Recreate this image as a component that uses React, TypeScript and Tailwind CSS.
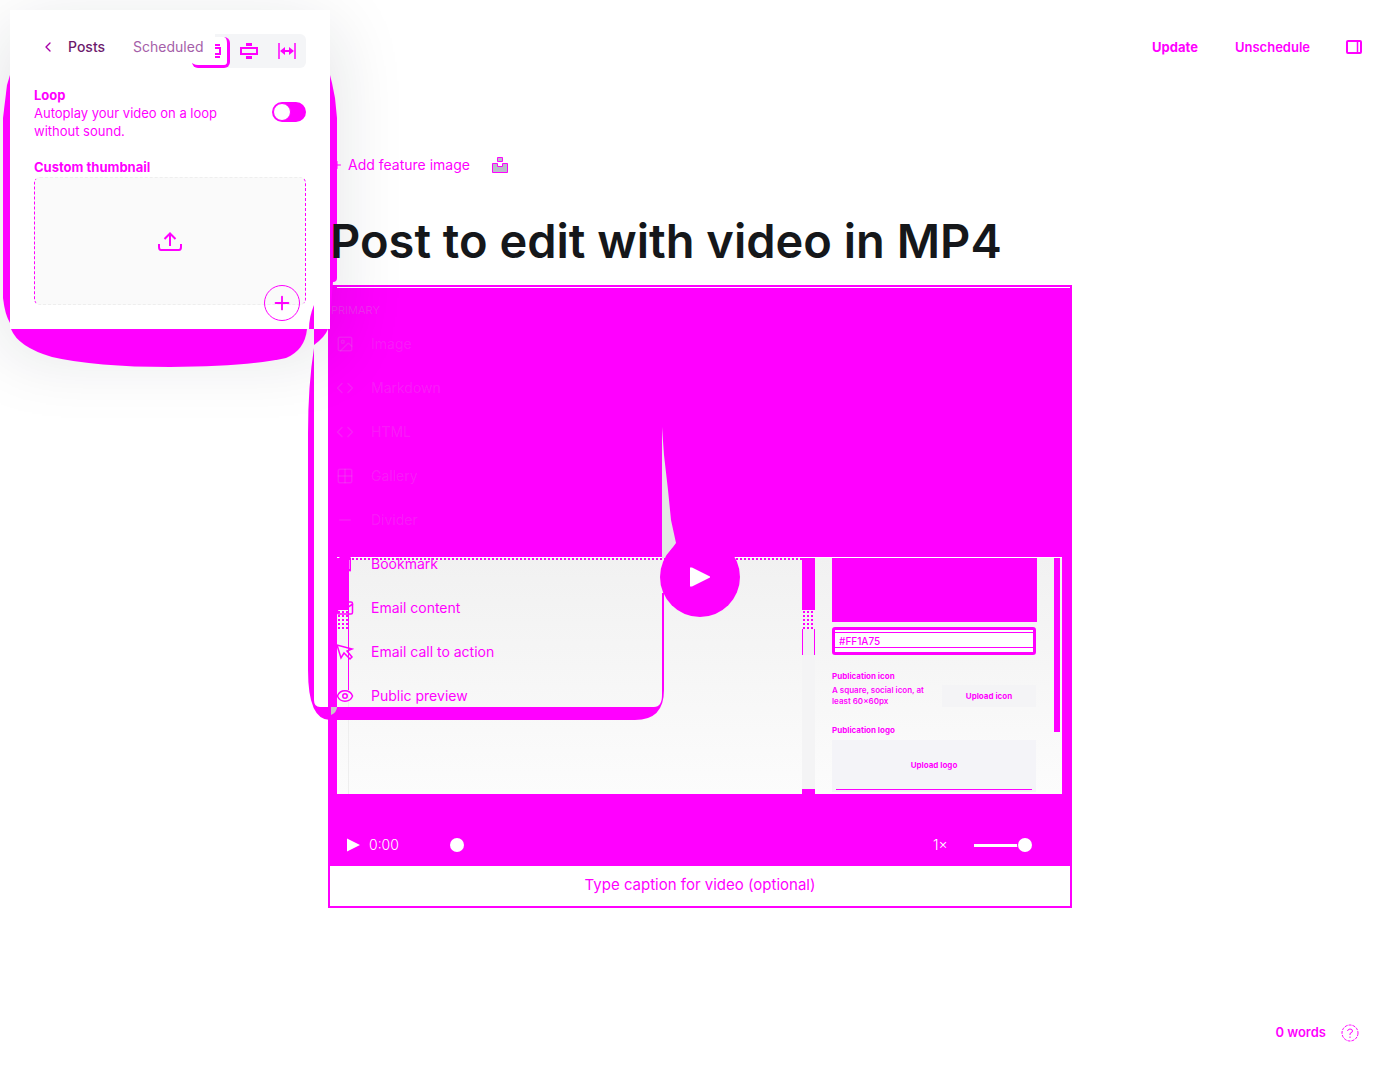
import React from 'react';
import { ChevronLeft, Mail, Eye, Image, Code, Grid2x2, Minus, Bookmark, Plus } from 'lucide-react';

const cardItems = [
  { label: 'Image', icon: Image },
  { label: 'Markdown', icon: Code },
  { label: 'HTML', icon: Code },
  { label: 'Gallery', icon: Grid2x2 },
  { label: 'Divider', icon: Minus },
];

function CursorIcon() {
  return (
    <svg width="18" height="18" viewBox="0 0 18 18" fill="none" stroke="currentColor" strokeWidth="1.5">
      <path d="M1 2l4 13 3-5 6 6 2-2-5-6 5-2z" />
    </svg>
  );
}

function EditorHeader() {
  return (
    <header className="flex h-[94px] items-center justify-between pl-8 pr-[38px] text-[#ff00ff]">
      <div className="relative z-20 flex items-center">
        <a href="#posts" className="flex h-8 items-center bg-white pl-2 pr-4 text-sm font-medium text-[#6c1a6c]">
          <ChevronLeft size={16} strokeWidth={2} className="mr-3 text-[#a800a8]" />
          Posts
        </a>
        <span className="h-8 bg-white px-3 text-sm leading-8 text-[#a55fa9]">Scheduled</span>
      </div>
      <div className="flex items-center">
        <button className="mr-[37px] text-[13px] font-bold leading-8">Update</button>
        <button className="mr-9 text-[13px] font-semibold leading-8">Unschedule</button>
        <button aria-label="Settings">
          <svg width="16" height="14" viewBox="0 0 16 14" fill="none" stroke="currentColor" strokeWidth="2">
            <rect x="1" y="1" width="14" height="12" rx="1" />
            <path d="M11.500 1v12" strokeWidth="1.5" />
          </svg>
        </button>
      </div>
    </header>
  );
}

function VideoSettings() {
  return (
    <>
      <aside className="absolute left-[10px] top-[10px] z-10 w-80 bg-white p-6 text-[13px] text-[#ff00ff] shadow-[0_20px_70px_rgba(20,25,40,0.14)]">
        <div className="ml-auto flex h-[34px] w-[114px] items-center rounded-md bg-[#f4f5f7]">
          <button aria-label="Regular width" className="mt-[3px] flex h-[31px] w-[38px] items-center justify-center rounded-md border-b-[3px] border-r-[3px] border-[#ff00ff] bg-white pl-1">
            <svg width="18" height="16" viewBox="0 0 18 16" fill="none" stroke="currentColor" strokeWidth="2">
              <path d="M1 2h16M1 14h16" />
              <rect x="1" y="5" width="16" height="6" />
            </svg>
          </button>
          <button aria-label="Wide width" className="flex flex-1 justify-center">
            <svg width="18" height="16" viewBox="0 0 18 16" fill="none" stroke="currentColor" strokeWidth="2">
              <path d="M6 1.500h6M6 14.500h6" strokeWidth="3" />
              <rect x="1" y="5" width="16" height="6" />
            </svg>
          </button>
          <button aria-label="Full width" className="flex flex-1 justify-center">
            <svg width="18" height="16" viewBox="0 0 18 16" fill="none" stroke="currentColor" strokeWidth="2">
              <path d="M1 0v16M17 0v16" strokeWidth="1.500" />
              <path d="M3 8h12" />
              <path d="M7 4v8L2 8zM11 4v8l5-4z" fill="currentColor" stroke="none" />
            </svg>
          </button>
        </div>
        <label className="mt-[18px] flex items-start justify-between">
          <span className="w-48 leading-[18px]">
            <span className="block font-bold">Loop</span>
            Autoplay your video on a loop without sound.
          </span>
          <input
            type="checkbox"
            className="mt-4 h-5 w-[34px] appearance-none rounded-full bg-[#ff00ff] before:ml-px before:mt-px before:block before:size-[18px] before:rounded-full before:border before:border-[#ff00ff] before:bg-white"
          />
        </label>
        <p className="mt-[18px] font-bold leading-[18px]">Custom thumbnail</p>
        <button aria-label="Upload thumbnail" className="mt-px flex h-32 w-full items-center justify-center rounded-md border border-dashed border-[#ff00ff] border-y-[#eeeeee] bg-[#fafafa]">
          <svg width="24" height="20" viewBox="0 0 24 20" fill="none" stroke="currentColor" strokeWidth="2">
            <path d="M12 15V2M6.500 8L12 2.500 17.500 8" />
            <path d="M1 13v3q0 3 2 3h18q2 0 2-3v-3" />
          </svg>
        </button>
      </aside>
      <svg aria-hidden="true" className="pointer-events-none absolute left-0 top-0 z-10" width="340" height="370" viewBox="0 0 340 370" fill="#ff00ff">
        <path d="M10 75L7 85 3 118V298Q5 315 10 323Z" />
        <path d="M330 75l2 8 3 15 2 20v160q0 4-4 4l-3 38z" />
        <path d="M11 329H307Q305 350 286 358Q245 367 170 367Q95 367 52 357Q18 347 11 329Z" />
        <path d="M314 329h14q-3 8-14 16z" />
        <path d="M314 305q-5 12-5 24h5z" />
      </svg>
      <button aria-label="Add a card" className="absolute left-[264px] top-[285px] z-20 flex size-9 items-center justify-center rounded-full border border-[#ff00ff] text-[#ff00ff]">
        <Plus size={22} strokeWidth={2} />
      </button>
    </>
  );
}

function CardMenu() {
  const row = 'flex h-11 w-full items-center gap-[17px] pl-[5px] text-sm';
  return (
    <div className="absolute -left-5 top-5">
      <svg aria-hidden="true" className="absolute left-0 top-0" width="372" height="416" viewBox="308 305 372 416">
        <path d="M314 348Q308 385 308 434V670Q308 720 330 720H635Q664 720 664 690V593h-2V695Q662 707 654 707H320Q314 707 314 700Z" fill="#ff00ff" />
        <path d="M331 707h6q0 5-6 8z" fill="#c8c8c8" />
        <path d="M662 427L664 455 668 490 671 520 676 543 665 558 662 558Z" fill="#e3e7e4" />
      </svg>
      <div className="relative w-[354px] pl-[23px] text-[#ff00ff]">
        <p className="h-[17px] text-[11px] leading-none text-[#c8b0c8]/25">PRIMARY</p>
        {cardItems.map(({ label, icon: Icon }) => (
          <button key={label} className={`${row} text-[#c8d0c8]/15`}>
            <Icon size={18} />
            {label}
          </button>
        ))}
        <button className={row}><Bookmark size={18} />Bookmark</button>
        <button className={row}><Mail size={18} />Email content</button>
        <button className={row}><CursorIcon />Email call to action</button>
        <button className={row}><Eye size={18} />Public preview</button>
      </div>
    </div>
  );
}

function Divider() {
  return (
    <div className="flex w-[13px] shrink-0 flex-col">
      <div className="h-[52px] bg-[#ff00ff]" />
      <div className="h-[19px] bg-[radial-gradient(#ff00ff_1px,transparent_1px)] bg-[length:4px_4px]" />
      <div className="h-[26px] border-x border-[#ff00ff] bg-[#f2f2f3]" />
      <div className="flex-1 bg-[#f4f4f5]" />
      <div className="h-[5px] bg-[#ff00ff]" />
    </div>
  );
}

function VideoFrame() {
  return (
    <div className="flex flex-col bg-[#ff00ff]">
      <div className="ml-[7px] h-px bg-white" />
      <div className="h-[269px]" />
      <div className="ml-[7px] mr-2 h-px bg-white" />
      <div className="ml-[7px] mr-2 flex h-[236px] bg-gradient-to-b from-[#f1f1f1] to-[#fcfcfc] text-[8px] leading-[11px] text-[#ff00ff]">
        <div className="flex w-3 flex-col">
          <div className="h-[52px] bg-[#ff00ff]" />
          <div className="h-[19px] border-r border-[#ff00ff] bg-[radial-gradient(#ff00ff_1px,transparent_1px)] bg-[length:4px_4px]" />
          <div className="h-[61px] border-r border-[#ff00ff]" />
          <div className="flex-1 border-r border-[#eeeeee]" />
        </div>
        <div className="flex-1 border-t-2 border-dotted border-[#ff00ff]" />
        <Divider />
        <div className="flex w-[239px] flex-col pl-[17px] pr-[18px]">
          <div className="-mr-px h-[64px] shrink-0 bg-[#ff00ff]" />
          <input
            aria-label="Accent color"
            defaultValue="#FF1A75"
            className="mt-[5px] h-7 w-full shrink-0 rounded-[3px] border-[3px] border-[#ff00ff] bg-white px-1 text-[10px] font-medium shadow-[inset_0_-4px_0_white,inset_0_-5px_0_#ff00ff,inset_0_2px_0_white,inset_0_3px_0_#ff00ff]"
          />
          <div className="mt-4 flex items-end justify-between">
            <div>
              <p className="mb-[3px] font-bold">Publication icon</p>
              <p className="w-[92px] font-semibold">A square, social icon, at least 60x60px</p>
            </div>
            <button className="h-[22px] w-[94px] bg-[#f4f4f6] font-bold">Upload icon</button>
          </div>
          <p className="mt-[18px] font-bold">Publication logo</p>
          <button className="mt-1 h-[52px] bg-[#f4f4f8] px-1 font-bold">
            <span className="flex h-12 items-center justify-center border-b border-[#ff00ff]">Upload logo</span>
          </button>
        </div>
        <div className="w-2 pr-0.5"><div className="h-[174px] bg-[#ff00ff]" /></div>
      </div>
      <div className="flex h-[72px] items-end pb-[11px] pl-[17px] pr-[38px] text-white">
        <button aria-label="Play" className="flex h-5 w-[13px] items-center">
          <svg width="13" height="14" viewBox="0 0 13 14" fill="currentColor"><path d="M0 0.500L13 7 0 13.500z" /></svg>
        </button>
        <span className="ml-[9px] w-[81px] text-sm font-light">0:00</span>
        <input
          type="range"
          aria-label="Seek"
          defaultValue={0}
          className="mb-[3px] h-[14px] flex-1 appearance-none bg-transparent [&::-webkit-slider-thumb]:size-[14px] [&::-webkit-slider-thumb]:appearance-none [&::-webkit-slider-thumb]:rounded-full [&::-webkit-slider-thumb]:bg-white"
        />
        <button className="ml-[18px] w-[41px] text-left text-sm font-light">1×</button>
        <input
          type="range"
          aria-label="Volume"
          defaultValue={100}
          className="mb-[3px] h-[14px] w-[58px] appearance-none bg-transparent [&::-webkit-slider-runnable-track]:h-[3px] [&::-webkit-slider-runnable-track]:bg-white [&::-webkit-slider-thumb]:-mt-[6px] [&::-webkit-slider-thumb]:size-[14px] [&::-webkit-slider-thumb]:appearance-none [&::-webkit-slider-thumb]:rounded-full [&::-webkit-slider-thumb]:bg-white [&::-webkit-slider-thumb]:shadow-[0_0_0_1px_#ff00ff]"
        />
      </div>
    </div>
  );
}

export default function App() {
  return (
    <div className="relative flex min-h-screen flex-col overflow-hidden bg-white font-['Inter',sans-serif]">
      <EditorHeader />
      <VideoSettings />
      <main className="mx-auto w-full max-w-[744px] pt-[59px]">
        <div className="relative z-20 flex h-6 items-center pl-[3px] text-sm text-[#ff00ff]">
          <button className="flex items-center">
            <Plus size={12} strokeWidth={2} className="mr-[5px]" />
            Add feature image
          </button>
          <button aria-label="Unsplash" className="ml-[22px]">
            <svg width="16" height="16" viewBox="0 0 16 16" fill="#b8c0c8" stroke="#ff00ff">
              <path d="M5.500 0.500h5v4h-5zM0.500 6.500h5v3h5v-3h5v9h-15z" />
            </svg>
          </button>
        </div>
        <h1 className="relative z-20 mt-9 whitespace-nowrap pl-0.5 text-[47px] font-semibold leading-[56px] text-[#15171a]">Post to edit with video in MP4</h1>
        <figure className="relative mt-4 border-2 border-[#ff00ff]">
          <VideoFrame />
          <div className="absolute -left-0.5 -top-0.5">
            <CardMenu />
          </div>
          <button aria-label="Play video" className="absolute left-1/2 top-[250px] flex size-20 -translate-x-1/2 items-center justify-center rounded-full bg-[#ff00ff]">
            <svg width="20" height="20" viewBox="0 0 20 20" fill="white"><path d="M0 0.500h2L20 9.500v1L2 19.500H0z" /></svg>
          </button>
          <figcaption className="h-10 text-center text-[15px] leading-[38px] text-[#ff00ff]">Type caption for video (optional)</figcaption>
        </figure>
      </main>
      <footer className="mt-auto flex h-[94px] items-center justify-end gap-[15px] pr-[41px] text-[13px] font-semibold text-[#ff00ff]">
        0 words
        <button aria-label="Help">
          <svg width="18" height="18" viewBox="0 0 18 18" fill="none" stroke="currentColor">
            <circle cx="9" cy="9" r="8" strokeDasharray="3 1" />
            <path d="M6.500 7Q7 5 9 5q2.500 0 2.500 2Q11.500 8.500 9 9.500v1.500M9 12.500V14" />
          </svg>
        </button>
      </footer>
    </div>
  );
}
